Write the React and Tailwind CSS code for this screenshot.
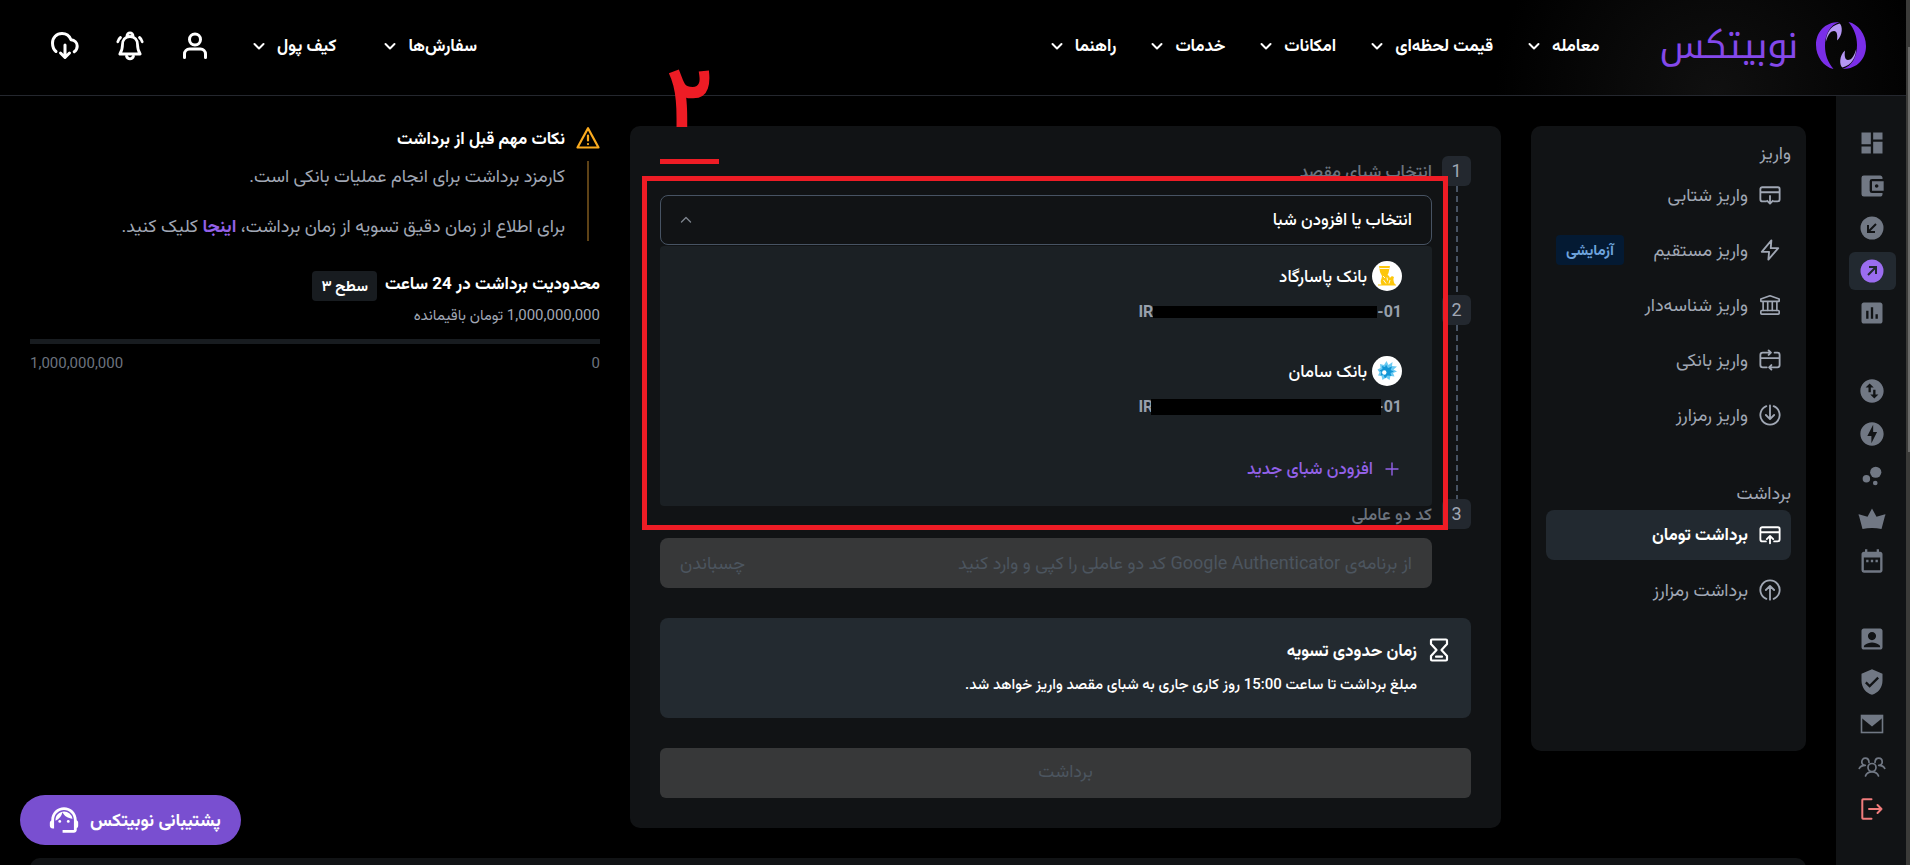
import React, { useState } from "react";
import {
  MdAccountBalanceWallet,
  MdAccountBox,
  MdAssessment,
  MdBubbleChart,
  MdDashboard,
  MdDateRange,
  MdOfflineBolt,
  MdSupportAgent,
  MdSwapVerticalCircle,
  MdVerifiedUser,
} from "react-icons/md";

function Svg({ children, className = "size-6", width = 2, box = "0 0 24 24" }) {
  return (
    <svg viewBox={box} className={className} fill="none" stroke="currentColor" strokeWidth={width} strokeLinecap="round" strokeLinejoin="round" aria-hidden="true">
      {children}
    </svg>
  );
}

const Chevron = ({ className, width = 2 }) => (
  <Svg className={className} box="0 0 12 12" width={width}>
    <path d="M1.5 4 6 8.500 10.500 4" />
  </Svg>
);

const LogoMark = () => (
  <svg viewBox="0 0 50 47" className="w-[50px] h-[47px]" aria-hidden="true">
    <g>
      <path fill="#7a2ee8" d="M23.500 0C8 0 0 11 0 23c0 12 8 22 17.500 24C11.500 40 9 32 9 24 9 12 14 3 23.500 0Z" />
      <path fill="#b596f5" d="M23.500 1.500C14 4 10 12 9.800 20 12 12 15 9 18 9c3 0 3.800 4 3 9.500C27 13.500 26.800 3.500 23.500 1.500Z" />
    </g>
    <g transform="rotate(180 25 23.500)">
      <path fill="#7a2ee8" d="M23.500 0C8 0 0 11 0 23c0 12 8 22 17.500 24C11.500 40 9 32 9 24 9 12 14 3 23.500 0Z" />
      <path fill="#b596f5" d="M23.500 1.500C14 4 10 12 9.800 20 12 12 15 9 18 9c3 0 3.800 4 3 9.500C27 13.500 26.800 3.500 23.500 1.500Z" />
    </g>
  </svg>
);

const UserIcon = () => (
  <Svg className="size-[30px]" box="0 0 30 30" width={3}>
    <circle cx="15" cy="8.500" r="5.500" />
    <path d="M4.500 26.500v-3.500a5 5 0 0 1 5-5h11a5 5 0 0 1 5 5v3.500" />
  </Svg>
);

const BellIcon = () => (
  <Svg className="size-[30px]" box="0 0 30 30" width={2.800}>
    <path d="M12 4.800a3 3 0 1 1 6 0M15 5.500c-5 0-7.500 3.500-7.500 8 0 5-1 7-2.700 9.500h20.400c-1.700-2.500-2.700-4.500-2.700-9.500 0-4.500-2.500-8-7.500-8Z" />
    <path d="M11.500 25c.6 2 2 2.800 3.500 2.800s2.900-.8 3.500-2.800" />
    <path d="M5.500 6.500C4 7.600 3.200 9 2.800 10.800M24.500 6.500c1.500 1.100 2.300 2.500 2.700 4.300" />
  </Svg>
);

const CloudIcon = () => (
  <Svg className="size-[30px]" box="0 0 30 30" width={3}>
    <path d="M6 20.500C3.500 18.500 2.500 15.500 2.500 12c0-5.500 4-9.500 9.500-9.500 4.500 0 7.500 2.500 9 6.200 3.600.3 6.200 3 6.200 6.300 0 2.500-1 4.500-3 5.800" />
    <path d="M15 14v12M10.500 22l4.500 4.500 4.500-4.500" />
  </Svg>
);

const CardDown = () => (
  <Svg className="size-[22px]">
    <path d="M7.500 19H4a2.500 2.500 0 0 1-2.500-2.500V5.500A2 2 0 0 1 3.500 3.500h17a2 2 0 0 1 2 2v11A2.500 2.500 0 0 1 20 19h-3.500M1.500 9h21M12 13v7.500M9 18.300l3 3 3-3" />
  </Svg>
);

const CardUp = () => (
  <Svg className="size-[22px]">
    <path d="M7.500 19H4a2.500 2.500 0 0 1-2.500-2.500V5.500A2 2 0 0 1 3.500 3.500h17a2 2 0 0 1 2 2v11A2.500 2.500 0 0 1 20 19h-3.500M1.500 9h21M12 21v-7.500M8.500 16.500l3.500-3.500 3.500 3.500" />
  </Svg>
);

const Bolt = () => (
  <Svg className="size-[22px]">
    <path d="M13.500 1.500 3 14h8l-.8 8.500L21 10h-8.200l.7-8.500Z" />
  </Svg>
);

const Bank = () => (
  <Svg className="size-[22px]" width={1.800}>
    <path d="M2 8V5.500L12 2l10 3.500V8ZM4.500 8v10M9.500 8v10M14.500 8v10M19.500 8v10" />
    <rect x="2" y="18" width="20" height="4" rx="1" />
  </Svg>
);

const CardSwap = () => (
  <Svg className="size-[22px]">
    <path d="M8.500 20H4a2.500 2.500 0 0 1-2.500-2.500V6.500A2.500 2.500 0 0 1 4 4h8.500M17 4h3a2.500 2.500 0 0 1 2.500 2.500v11A2.500 2.500 0 0 1 20 20h-8M1.500 10h21M10.500 1.500l2.500 2.500-2.500 2.500M13.500 17.500 11 20l2.500 2.500" />
  </Svg>
);

const CircleDown = () => (
  <Svg className="size-[22px]">
    <path d="M8 2.300a10.500 10.500 0 1 0 8 0M12 1.500V16M7.500 12l4.500 4.500 4.500-4.500" />
  </Svg>
);

const CircleUp = () => (
  <Svg className="size-[22px]">
    <path d="M8 21.700a10.500 10.500 0 1 1 8 0M12 22.500V8M7.500 12 12 7.500l4.500 4.500" />
  </Svg>
);

const Hourglass = () => (
  <Svg className="h-6 w-5" box="0 0 20 24" width={2.200}>
    <path d="M3 1.500h14a1 1 0 0 1 1 1V6l-5.500 6 5.500 6v3.500a1 1 0 0 1-1 1H3a1 1 0 0 1-1-1V18l5.500-6L2 6V2.500a1 1 0 0 1 1-1ZM7 18.700h6" />
  </Svg>
);

const Warning = () => (
  <Svg className="size-6 text-[#fbab1f]" width={2.200}>
    <path d="M12 2.200 1.500 21.500h21L12 2.200ZM12 9.500v5M12 18v.1" />
  </Svg>
);

// arrows punched out of a filled disc
const DiscIn = () => (
  <svg viewBox="0 0 28 28" className="size-7" aria-hidden="true">
    <circle cx="14" cy="14" r="11.500" fill="currentColor" />
    <path d="M18 10l-7.500 7.500M10 11v7h7" fill="none" stroke="#111315" strokeWidth="2" />
  </svg>
);

const DiscOut = () => (
  <svg viewBox="0 0 28 28" className="size-7" aria-hidden="true">
    <circle cx="14" cy="14" r="11.500" fill="currentColor" />
    <path d="M10 18l7.500-7.500M11 10h7v7" fill="none" stroke="#222930" strokeWidth="2" />
  </svg>
);

const Crown = () => (
  <svg viewBox="0 0 28 28" className="size-7" fill="currentColor" aria-hidden="true">
    <path d="M14 3.500l4.500 8.300 8.700-2.600a1 1 0 0 1-.2 1.500L23.500 24c-6-1.200-13-1.200-19 0L1 10.700a1 1 0 0 1-.2-1.500l8.700 2.600L14 3.500Z" />
  </svg>
);

const Mail = () => (
  <svg viewBox="0 0 28 28" className="size-7" aria-hidden="true">
    <rect x="3.500" y="5.500" width="21" height="17" fill="none" stroke="currentColor" strokeWidth="1.600" />
    <path d="M3 5h22v2.500L14 16.500 3 7.500Z" fill="currentColor" />
  </svg>
);

const People = () => (
  <Svg className="size-7" box="0 0 28 28" width={1.700}>
    <circle cx="14" cy="14.500" r="4" />
    <path d="M7.500 23c.8-2.700 3.200-4.200 6.500-4.200s5.700 1.500 6.500 4.200" />
    <path d="M11 9.500c0-2.500-1.600-4.300-3.700-4.300S3.800 6.800 3.800 9s1.400 3.300 3.500 3.300M7.300 12.300c-3 0-5 .9-6 3" />
    <path d="M17 9.500c0-2.500 1.600-4.300 3.700-4.300s3.500 1.600 3.500 3.800-1.400 3.300-3.500 3.300M20.700 12.300c3 0 5 .9 6 3" />
  </Svg>
);

const Exit = () => (
  <Svg className="size-7 text-[#f07c7c]" box="0 0 28 28" width={2}>
    <path d="M13.500 4.300h-8.500a.7.700 0 0 0-.7.700v18a.7.700 0 0 0 .7.700h8.500M11 14h12.500M19.500 10l4 4-4 4" />
  </Svg>
);

const Pasargad = () => (
  <svg viewBox="0 0 30 30" className="size-[30px]" aria-hidden="true">
    <circle cx="15" cy="15" r="15" fill="#fff" />
    <path fill="#fdc70c" d="M7 5h11l-1.500 7-1 2c1.500.5 2 2 2.500 3 1-2 3-2.500 4-.5-1 1-.5 3 0 5l1 2h1v1H6v-1h3.500c-1-2-1-4 0-6l.5-2.500L8 11 7 5Z" />
    <path d="M7.500 7.500h10M11 15l2 2M11.500 19l2.500 3.500M18 19l-1 3.500M15 16.500l.5 3" stroke="#fff" strokeWidth=".9" />
  </svg>
);

const Saman = () => (
  <svg viewBox="0 0 30 30" className="size-[30px]" aria-hidden="true">
    <circle cx="15" cy="15" r="15" fill="#fff" />
    <path fill="#6ccbf3" d="M14.500 5l2 4 4-3-.5 4 5 .5-3.500 3 3.500 2-4 1.500 1.500 3.500-4-.5-1 4-3.500-2.500L10.500 24l-1-4-3.500-.5 1.500-3-2-3 3-1.500-.5-4 4 1Z" />
    <path fill="#1296d6" d="M14 8.500l2 3.500 4-1.500-1.300 3.500 3.300 1.500-3.500 1.500 1 3-4-.5-2.500 3-1.500-3.500-3 .5 1-3.500-2-1.500 3-1.500-.5-3 3 1Z" />
    <circle cx="12.300" cy="16.500" r="2.200" fill="#fff" />
  </svg>
);

const navItems = ["معامله", "قیمت لحظه‌ای", "امکانات", "خدمات", "راهنما"];
const accountItems = ["سفارش‌ها", "کیف پول"];

const railGroups = [
  [
    { label: "داشبورد", icon: MdDashboard },
    { label: "کیف پول", icon: MdAccountBalanceWallet },
    { label: "واریز", icon: DiscIn },
    { label: "برداشت", icon: DiscOut, active: true },
    { label: "گزارش", icon: MdAssessment },
  ],
  [
    { label: "تبدیل", icon: MdSwapVerticalCircle },
    { label: "معامله سریع", icon: MdOfflineBolt },
    { label: "استخر", icon: MdBubbleChart },
    { label: "ویژه", icon: Crown },
    { label: "تقویم", icon: MdDateRange },
  ],
  [
    { label: "پروفایل", icon: MdAccountBox },
    { label: "امنیت", icon: MdVerifiedUser },
    { label: "پیام‌ها", icon: Mail },
    { label: "دعوت دوستان", icon: People },
    { label: "خروج", icon: Exit },
  ],
];

const depositItems = [
  { label: "واریز شتابی", icon: CardDown },
  { label: "واریز مستقیم", icon: Bolt, badge: "آزمایشی" },
  { label: "واریز شناسه‌دار", icon: Bank },
  { label: "واریز بانکی", icon: CardSwap },
  { label: "واریز رمزارز", icon: CircleDown },
];

const withdrawItems = [
  { label: "برداشت تومان", icon: CardUp, active: true },
  { label: "برداشت رمزارز", icon: CircleUp },
];

const accounts = [
  { name: "بانک پاسارگاد", logo: Pasargad, mask: "h-3 w-[224px]" },
  { name: "بانک سامان", logo: Saman, mask: "-mr-1 -ml-0.5 h-4 w-[230px]" },
];

function NavButton({ children }) {
  return (
    <button type="button" className="flex items-center gap-3 whitespace-nowrap text-[17px] font-bold text-white">
      {children}
      <Chevron className="size-3" />
    </button>
  );
}

function Header() {
  return (
    <header className="flex h-24 shrink-0 items-center justify-between border-b border-[#24272e] bg-[radial-gradient(circle_at_90%_100%,#101010,#000_220px)] pr-10 pb-1 pl-[50px]">
      <div className="flex items-center">
        <a href="#home" className="flex items-center gap-[18px]">
          <LogoMark />
          <span className="font-['Noto_Kufi_Arabic','Vazirmatn',sans-serif] text-4xl leading-[48px] text-[#8448ea]">نوبیتکس</span>
        </a>
        <nav className="mr-[60px] flex items-center gap-[35px]">
          {navItems.map((item) => (
            <NavButton key={item}>{item}</NavButton>
          ))}
        </nav>
      </div>
      <div className="flex items-center text-white">
        <div className="ml-[43px] flex items-center gap-12">
          {accountItems.map((item) => (
            <NavButton key={item}>{item}</NavButton>
          ))}
        </div>
        <div className="flex items-center gap-[35px]">
          <button type="button" aria-label="حساب کاربری"><UserIcon /></button>
          <button type="button" aria-label="اعلان‌ها"><BellIcon /></button>
          <button type="button" aria-label="دانلود"><CloudIcon /></button>
        </div>
      </div>
    </header>
  );
}

function Rail() {
  return (
    <nav className="flex w-[70px] shrink-0 flex-col items-center gap-10 bg-[#111315] pt-7 pl-0.5 text-[#717884]">
      {railGroups.map((group, index) => (
        <div key={index} className="flex h-[208px] flex-col justify-between">
          {group.map(({ label, icon: Icon, active }) => (
            <a
              key={label}
              href="#menu"
              aria-label={label}
              className={`flex h-[38px] w-[47px] items-center justify-center rounded-md ${active ? "bg-[#222930] text-[#9b6df0]" : ""}`}
            >
              <Icon className="size-7" />
            </a>
          ))}
        </div>
      ))}
    </nav>
  );
}

function MenuItem({ label, icon: Icon, badge, active }) {
  return (
    <li>
      <a
        href="#item"
        className={`flex h-[50px] items-center rounded-lg px-[10px] ${active ? "bg-[#222930] text-[17px] font-bold text-white" : "text-lg text-[#a0a7b4]"}`}
      >
        <Icon />
        <span className="mr-[11px]">{label}</span>
        {badge && (
          <span className="mr-auto rounded-sm bg-[#041a33] px-[10px] text-[15px] leading-[30px] font-bold text-[#6ea3dd]">{badge}</span>
        )}
      </a>
    </li>
  );
}

function Menu() {
  return (
    <aside className="min-h-[625px] rounded-[10px] bg-[#111315] px-[15px] pt-[9px]">
      <h2 className="text-lg leading-[35px] text-[#a0a7b4]">واریز</h2>
      <ul className="flex flex-col gap-[5px]">
        {depositItems.map((item) => (
          <MenuItem key={item.label} {...item} />
        ))}
      </ul>
      <h2 className="mt-[35px] text-lg leading-[35px] text-[#a0a7b4]">برداشت</h2>
      <ul className="flex flex-col gap-[5px]">
        {withdrawItems.map((item) => (
          <MenuItem key={item.label} {...item} />
        ))}
      </ul>
    </aside>
  );
}

function Step({ number, last, className = "", children }) {
  return (
    <div className={`flex gap-[10px] ${className}`}>
      <div className="flex w-[29px] shrink-0 flex-col items-center">
        <span className="flex h-[30px] w-[29px] items-center justify-center rounded-md bg-[#23282f] text-lg text-[#a0a7b4]">{number}</span>
        {!last && (
          <span className="w-0.5 flex-1 bg-[repeating-linear-gradient(to_bottom,#475363_0_6px,transparent_6px_10px)]" />
        )}
      </div>
      <div className="min-w-0 flex-1">{children}</div>
    </div>
  );
}

function AccountSelect() {
  const [open, setOpen] = useState(true);

  return (
    <div className="relative mt-[9px]">
      <button
        type="button"
        aria-expanded={open}
        onClick={() => setOpen(!open)}
        className="flex h-[50px] w-full items-center justify-between rounded-lg border border-[#475363] px-[19px] text-[17px] font-medium text-white"
      >
        انتخاب یا افزودن شبا
        <Chevron className="size-3 rotate-180 text-[#7c838d]" width={1.400} />
      </button>
      {open && (
        <ul className="absolute inset-x-0 top-[51px] z-10 rounded-sm bg-[#1b2024]">
          {accounts.map(({ name, logo: Logo, mask }) => (
            <li key={name}>
              <button type="button" className="flex h-[95px] w-full flex-col items-start gap-[9px] px-[30px] pt-[15px]">
                <span className="flex items-center gap-[5px] text-[17px] leading-[30px] font-medium text-white">
                  <Logo />
                  {name}
                </span>
                <span dir="ltr" className="flex items-center text-base leading-6 font-bold text-[#98a0ac]">
                  IR
                  <span className={`relative bg-black ${mask}`} />
                  -01
                </span>
              </button>
            </li>
          ))}
          <li>
            <button type="button" className="flex h-[70px] w-full items-center gap-3 px-[33px] pb-1 text-[17px] font-medium text-[#9361e8]">
              <Svg className="size-[14px]" box="0 0 14 14" width={1.400}>
                <path d="M7 1v12M1 7h12" />
              </Svg>
              افزودن شبای جدید
            </button>
          </li>
        </ul>
      )}
    </div>
  );
}

function WithdrawForm() {
  return (
    <section className="relative rounded-[10px] bg-[#111315] p-[30px]">
      <Step number={1} className="min-h-[139px]">
        <p className="text-[17px] leading-[30px] font-medium text-[#6c737e]">انتخاب شبای مقصد</p>
        <AccountSelect />
      </Step>
      <Step number={2} className="min-h-[204px]" />
      <Step number={3} last>
        <label htmlFor="otp" className="block text-[17px] leading-[30px] font-medium text-[#6c737e]">کد دو عاملی</label>
        <div className="mt-[9px] flex h-[50px] items-center rounded-lg bg-[#373839] px-5 text-lg text-[#4c555f]">
          <input
            id="otp"
            disabled
            placeholder="از برنامه‌ی Google Authenticator کد دو عاملی را کپی و وارد کنید"
            className="min-w-0 flex-1 bg-transparent placeholder:text-[#4c555f]"
          />
          <button type="button" disabled>چسباندن</button>
        </div>
      </Step>

      <div className="mt-[30px] flex h-[100px] gap-3 rounded-lg bg-[#232a30] px-[22px] pt-5 text-white">
        <Hourglass />
        <div>
          <h3 className="text-[17px] leading-6 font-bold">زمان حدودی تسویه</h3>
          <p className="mt-[10px] text-[15px] leading-6 font-medium">مبلغ برداشت تا ساعت 15:00 روز کاری جاری به شبای مقصد واریز خواهد شد.</p>
        </div>
      </div>

      <button type="button" disabled className="mt-[30px] block h-[50px] w-full rounded-md bg-[#373839] pb-1 text-lg text-[#4c555f]">
        برداشت
      </button>

      {/* tutorial marker */}
      <div className="pointer-events-none absolute top-[50px] right-[53px] left-3 z-20 h-[354px] border-5 border-[#ee1c25]" />
      <div className="pointer-events-none absolute -top-[82px] left-[30px] z-20 h-[120px] w-[59px] border-b-5 border-[#ee1c25] text-center text-[86px] leading-[108px] font-bold text-[#ee1c25]">
        ۲
      </div>
    </section>
  );
}

function Notes() {
  return (
    <section>
      <h2 className="flex items-center gap-[11px] text-[17px] leading-6 font-bold text-white">
        <Warning />
        نکات مهم قبل از برداشت
      </h2>
      <div className="mt-[11px] flex gap-[11px]">
        <div className="flex w-6 justify-center">
          <span className="w-0.5 bg-[#5e4216]" />
        </div>
        <div className="flex flex-col gap-5 text-lg leading-[30px] text-[#a0a7b4]">
          <p>کارمزد برداشت برای انجام عملیات بانکی است.</p>
          <p>
            برای اطلاع از زمان دقیق تسویه از زمان برداشت، <a href="#times" className="font-bold text-[#9361e8]">اینجا</a> کلیک کنید.
          </p>
        </div>
      </div>

      <div className="mt-[30px] flex items-start gap-2 text-white">
        <h2 className="text-[17px] leading-6 font-bold">محدودیت برداشت در 24 ساعت</h2>
        <span className="rounded-sm bg-[#181c20] px-[9px] text-[15px] leading-[30px] font-bold">سطح ۳</span>
      </div>
      <p className="text-[15px] leading-7 text-[#a0a7b4]">1,000,000,000 تومان باقیمانده</p>
      <div className="mt-[10px] h-[5px] bg-[#181c20]" />
      <div className="mt-[7px] flex justify-between text-[15px] leading-6 text-[#6c737e]">
        <span>0</span>
        <span>1,000,000,000</span>
      </div>
    </section>
  );
}

export default function App() {
  return (
    <div dir="rtl" className="flex h-screen overflow-hidden bg-black font-['Roboto','Vazirmatn','Noto_Sans_Arabic','DejaVu_Sans',sans-serif]">
      <div className="w-1 shrink-0 bg-[#3b3b39] pt-[47px] pl-0.5">
        <div className="h-[405px] bg-[#6b6b69]" />
      </div>
      <div className="flex min-w-0 flex-1 flex-col">
        <Header />
        <div className="flex min-h-0 flex-1">
          <Rail />
          <main className="min-w-0 flex-1 px-[30px] pt-[30px]">
            <div className="grid grid-cols-[275fr_871fr_570fr] items-start gap-[30px]">
              <Menu />
              <WithdrawForm />
              <Notes />
            </div>
            <div className="mt-[30px] h-40 rounded-[10px] bg-[#111315]" />
          </main>
        </div>
      </div>
      <button type="button" className="fixed bottom-5 left-5 flex h-[50px] items-center gap-[9px] rounded-full bg-[#794fd0] pr-5 pl-[27px] text-lg font-bold text-white">
        پشتیبانی نوبیتکس
        <MdSupportAgent className="size-[34px]" />
      </button>
    </div>
  );
}
